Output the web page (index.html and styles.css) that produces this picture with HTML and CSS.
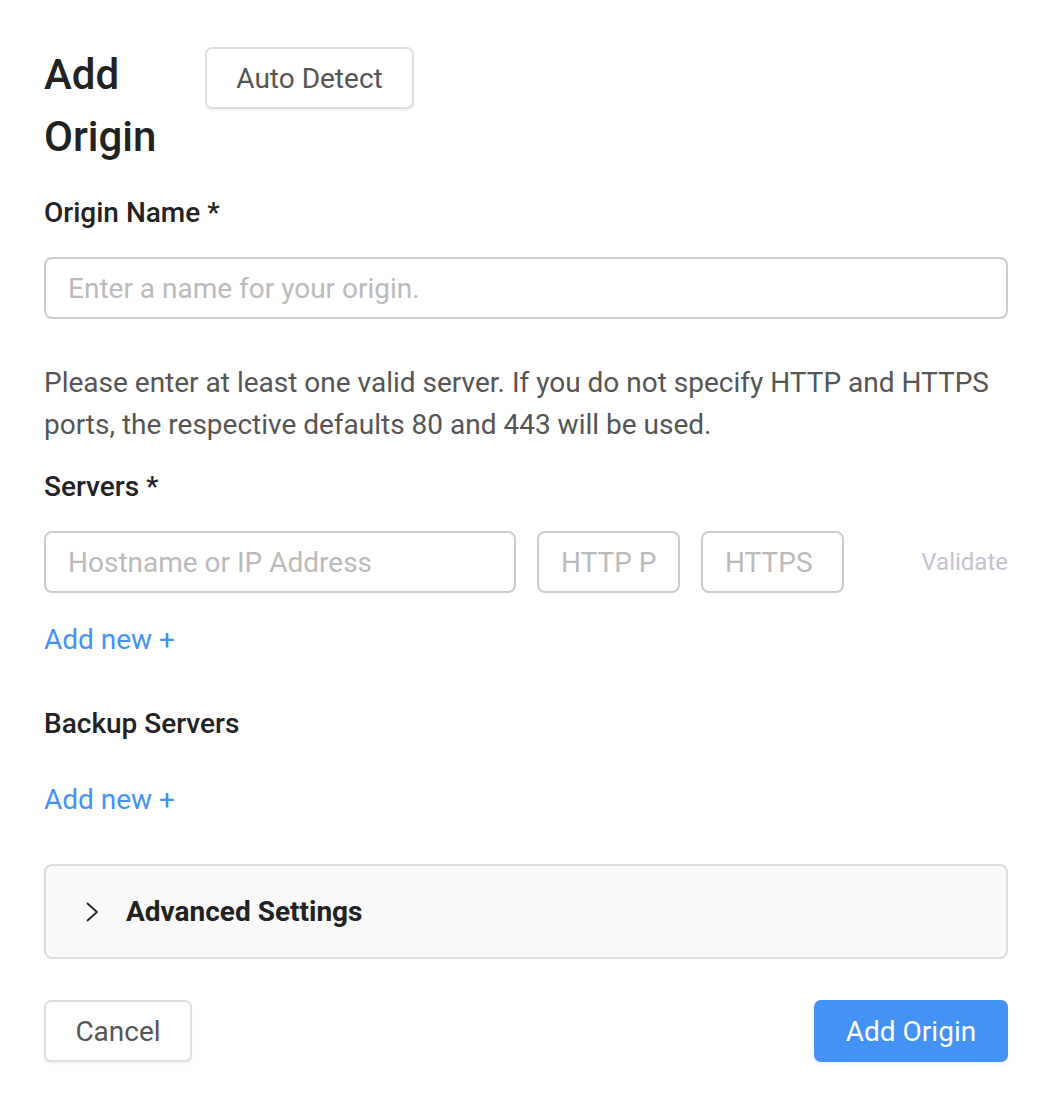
FILE: index.html
```html
<!DOCTYPE html>
<html lang="en">
<head>
<meta charset="utf-8">
<title>Add Origin</title>
<link rel="stylesheet" href="styles.css">
</head>
<body>
<div class="page">
  <div class="header">
    <h1 class="title">Add Origin</h1>
    <button class="btn btn-outline btn-auto">Auto Detect</button>
  </div>

  <label class="label label-name">Origin Name *</label>
  <input class="input input-name" type="text" placeholder="Enter a name for your origin.">

  <p class="help">Please enter at least one valid server. If you do not specify HTTP and HTTPS ports, the respective defaults 80 and 443 will be used.</p>

  <label class="label label-servers">Servers *</label>
  <div class="server-row">
    <input class="input input-host" type="text" placeholder="Hostname or IP Address">
    <input class="input input-port" type="text" placeholder="HTTP Port">
    <input class="input input-port" type="text" placeholder="HTTPS Port">
    <span class="validate">Validate</span>
  </div>
  <a class="add-new add-servers">Add new +</a>

  <div class="label label-backup">Backup Servers</div>
  <a class="add-new add-backup">Add new +</a>

  <div class="advanced">
    <svg class="chevron" width="14" height="22" viewBox="0 0 14 22"><path d="M2 2 L12 11 L2 20" fill="none" stroke="#222" stroke-width="1.8"/></svg>
    <span class="advanced-text">Advanced Settings</span>
  </div>

  <div class="footer">
    <button class="btn btn-outline btn-cancel">Cancel</button>
    <button class="btn btn-primary">Add Origin</button>
  </div>
</div>
</body>
</html>
```
FILE: styles.css
```css
* { box-sizing: border-box; }
html, body { margin: 0; padding: 0; background: #fff; }
body { font-family: Roboto, "Liberation Sans", sans-serif; color: #222; }
.page { padding: 44px 42px 40px 44px; width: 1050px; display: flex; flex-direction: column; align-items: stretch; }

.header { display: flex; align-items: flex-start; }
.title { margin: 0; width: 161px; font-size: 42px; line-height: 62px; font-weight: 500; color: #222; }
.btn { font-family: Roboto, "Liberation Sans", sans-serif; font-size: 28px; height: 62px; border-radius: 7px; cursor: pointer; padding: 0; }
.btn-outline { background: #fff; border: 2px solid #ddd; color: #555; box-shadow: 0 2px 2px rgba(0,0,0,0.05); }
.btn-auto { width: 209px; margin-top: 3px; }

.label { display: block; font-size: 28px; line-height: 42px; font-weight: 500; color: #222; }
.label-name { margin-top: 24px; }
.input { font-family: Roboto, "Liberation Sans", sans-serif; font-size: 28px; height: 62px; border: 2px solid #ccc; border-radius: 8px; padding: 0 22px; color: #333; background: #fff; outline: none; }
.input::placeholder { color: #bbb; }
.input-name { margin-top: 23px; width: 100%; }

.help { margin: 43px 0 0; font-size: 28px; line-height: 42px; color: #555; }
.label-servers { margin-top: 20px; }

.server-row { margin-top: 23px; display: flex; align-items: center; }
.input-host { width: 472px; }
.input-port { width: 143px; margin-left: 21px; }
.validate { margin-left: auto; font-size: 24px; color: #c3c3d0; }

.add-new { display: block; font-size: 28px; line-height: 42px; color: #4592f5; }
.add-servers { margin-top: 26px; }
.label-backup { margin-top: 42px; }
.add-backup { margin-top: 34px; }

.advanced { margin-top: 43px; height: 95px; background: #f9f9f9; border: 2px solid #ddd; border-radius: 8px; display: flex; align-items: center; padding-left: 39px; }
.chevron { display: block; }
.advanced-text { margin-left: 27px; font-size: 28px; font-weight: 700; color: #222; }

.footer { margin-top: 41px; display: flex; justify-content: space-between; }
.btn-cancel { width: 148px; }
.btn-primary { width: 194px; background: #4592f5; border: none; color: #fff; box-shadow: 0 3px 3px rgba(0,0,0,0.06); }
```
